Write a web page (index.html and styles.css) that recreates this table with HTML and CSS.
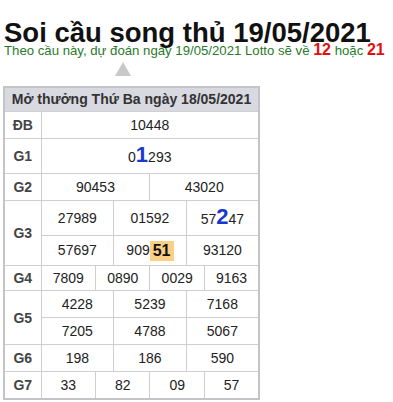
FILE: index.html
```html
<!DOCTYPE html>
<html lang="vi">
<head>
<meta charset="utf-8">
<link rel="stylesheet" href="styles.css">
</head>
<body>
<div class="page">
  <h1 class="title">Soi cầu song thủ 19/05/2021</h1>
  <p class="sub">Theo cầu này, dự đoán ngày 19/05/2021 Lotto sẽ về <b class="hit">12</b> hoặc <b class="hit">21</b></p>
  <div class="arrow-row"><span class="arrow"></span></div>
  <table class="kq">
    <colgroup>
      <col class="c-label">
      <col><col><col><col><col><col><col><col><col><col><col><col>
    </colgroup>
    <thead>
      <tr><th colspan="13" class="head">Mở thưởng Thứ Ba ngày 18/05/2021</th></tr>
    </thead>
    <tbody>
      <tr><th class="lbl">ĐB</th><td colspan="12">10448</td></tr>
      <tr class="g1"><th class="lbl">G1</th><td colspan="12">0<b class="big">1</b>293</td></tr>
      <tr><th class="lbl">G2</th><td colspan="6">90453</td><td colspan="6">43020</td></tr>
      <tr class="tall"><th class="lbl" rowspan="2">G3</th><td colspan="4">27989</td><td colspan="4">01592</td><td colspan="4">57<b class="big">2</b>47</td></tr>
      <tr class="tall2"><td colspan="4">57697</td><td colspan="4">909<b class="mark">51</b></td><td colspan="4">93120</td></tr>
      <tr class="short"><th class="lbl">G4</th><td colspan="3">7809</td><td colspan="3">0890</td><td colspan="3">0029</td><td colspan="3">9163</td></tr>
      <tr><th class="lbl" rowspan="2">G5</th><td colspan="4">4228</td><td colspan="4">5239</td><td colspan="4">7168</td></tr>
      <tr><td colspan="4">7205</td><td colspan="4">4788</td><td colspan="4">5067</td></tr>
      <tr><th class="lbl">G6</th><td colspan="4">198</td><td colspan="4">186</td><td colspan="4">590</td></tr>
      <tr><th class="lbl">G7</th><td colspan="3">33</td><td colspan="3">82</td><td colspan="3">09</td><td colspan="3">57</td></tr>
    </tbody>
  </table>
</div>
</body>
</html>
```

FILE: styles.css
```css
html, body {
  margin: 0;
  padding: 0;
  background: #fff;
}
body {
  font-family: "Liberation Sans", Arial, sans-serif;
  color: #222;
}
.page {
  padding: 19px 0 0 3px;
}
.title {
  margin: 0 0 0 1px;
  font-size: 27.5px;
  line-height: 28px;
  font-weight: bold;
  color: #111;
  white-space: nowrap;
}
.sub {
  margin: -5px 0 0 1px;
  font-size: 13.2px;
  line-height: 16px;
  color: #2a7a2a;
  white-space: nowrap;
}
.hit {
  color: #e01010;
  font-size: 16px;
}
.arrow-row {
  display: flex;
  padding: 3px 0 0 112px;
  height: 14px;
}
.arrow {
  width: 0;
  height: 0;
  border-left: 8px solid transparent;
  border-right: 8px solid transparent;
  border-bottom: 14px solid #c8c8c8;
}
.kq {
  margin-top: 10px;
  width: 257px;
  border-collapse: collapse;
  table-layout: fixed;
  border: 2px solid #c4c4c8;
  font-size: 14px;
  color: #222;
}
.c-label {
  width: 37px;
}
.kq th, .kq td {
  border: 1px solid #cfcfcf;
  text-align: center;
  padding: 4px 0;
  line-height: 18px;
  font-weight: normal;
  white-space: nowrap;
}
.kq .head {
  background: #d9d9e1;
  font-weight: bold;
  color: #333;
  padding: 3px 0;
  line-height: 17px;
  font-size: 14px;
}
.kq .lbl {
  font-weight: bold;
  color: #444;
}
.g1 td, .g1 th {
  line-height: 24px;
}
.tall td {
  line-height: 23px;
}
.tall2 td {
  line-height: 21px;
}
.kq .short td, .kq .short th {
  padding: 3px 0;
}
.big {
  color: #1838d0;
  font-size: 22px;
  font-weight: bold;
}
.mark {
  display: inline-block;
  background: #fbcf86;
  font-weight: bold;
  font-size: 16px;
  color: #111;
  padding: 1px 3px;
  line-height: 18px;
  vertical-align: middle;
}
```
